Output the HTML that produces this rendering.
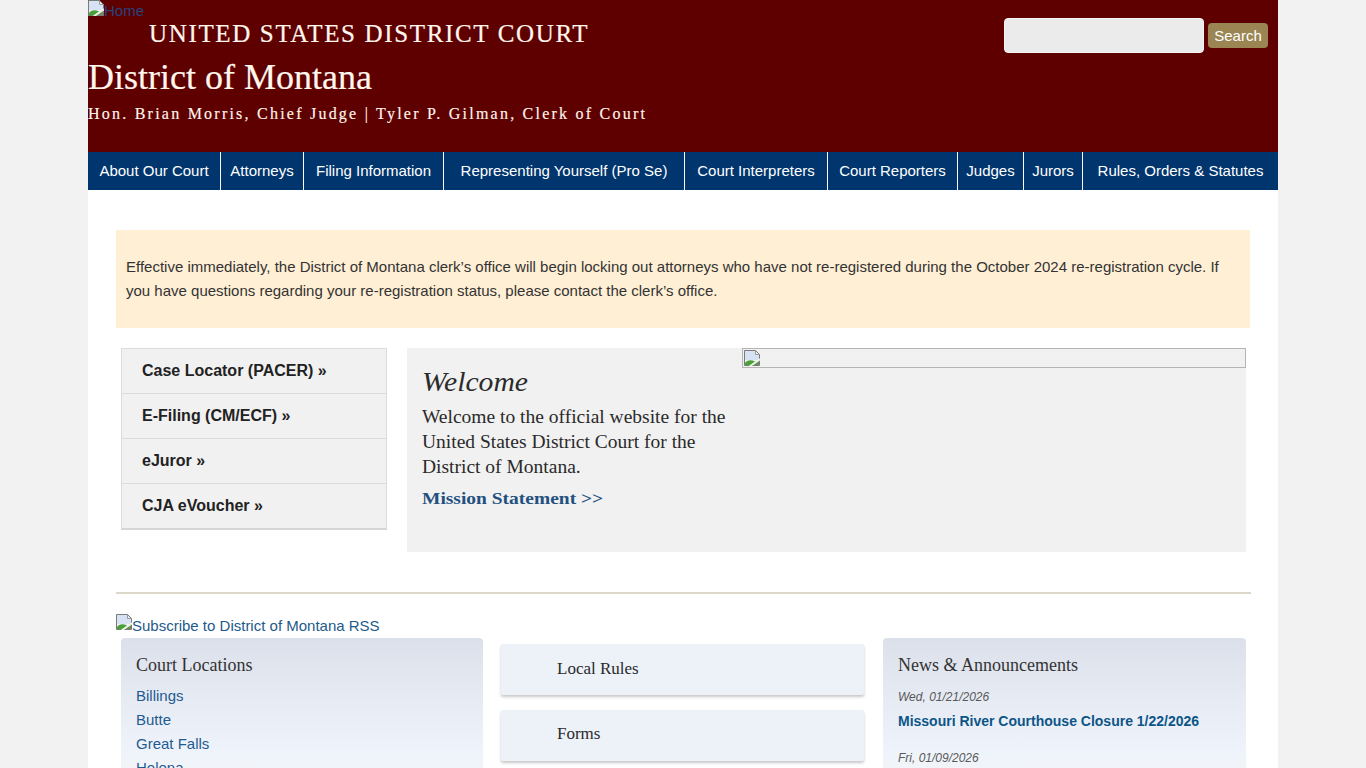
<!DOCTYPE html>
<html><head><meta charset="utf-8">
<style>
*{box-sizing:border-box;margin:0;padding:0}
html,body{width:1366px;height:768px;overflow:hidden}
body{background:#f2f2f2;font-family:"Liberation Sans",sans-serif;color:#222;position:relative}
#page{position:absolute;left:88px;top:0;width:1190px;height:768px;background:#fff}
#hdr{position:absolute;left:0;top:0;width:1190px;height:152px;background:#5f0000}
.abs{position:absolute;white-space:nowrap}
.serif{font-family:"Liberation Serif",serif}
#home{left:0;top:2px;font-size:15px;color:#28417f;line-height:17px}
.bi{display:inline-block;width:16px;height:16px;vertical-align:top;position:relative}
#usdc{left:61px;top:19px;font-size:25px;color:#fff6ee;-webkit-text-stroke:0.2px #fff6ee;letter-spacing:1.65px;line-height:30px}
#dom{left:0;top:57px;font-size:36px;color:#fff6ee;-webkit-text-stroke:0.2px #fff6ee;line-height:40px}
#hon{left:0;top:104px;font-size:16px;color:#fff6ee;-webkit-text-stroke:0.15px #fff6ee;letter-spacing:2.23px;line-height:20px}
#sinput{left:916px;top:18px;width:200px;height:35px;background:#ebebeb;border:1px solid #f6f2f2;border-radius:4px}
#sbtn{left:1120px;top:23px;width:60px;height:25px;background:#9a8553;border-radius:4px;color:#fff;font-size:15px;line-height:25px;text-align:center}
#nav{position:absolute;left:0;top:152px;width:1190px;height:38px;background:#00356d}
#nav .it{position:absolute;top:0;height:38px;line-height:38px;color:#fff;font-size:15px;text-align:center}
#nav .sep{position:absolute;top:0;width:1px;height:38px;background:#fff}
#alert{position:absolute;left:28px;top:230px;width:1134px;height:98px;background:#ffefd5;font-size:15px;line-height:24px;color:#333;padding:25px 10px 0 10px}

#side{position:absolute;left:33px;top:348px;width:266px;height:182px;border:1px solid #dcdcdc;border-bottom:2px solid #d6d6d6;background:#f1f1f1}
#side .li{position:absolute;left:0;width:264px;height:45px;border-top:1px solid #dcdcdc;font-weight:bold;font-size:16px;color:#222;line-height:20px;padding:12px 0 0 20px;white-space:nowrap}
#welcome{position:absolute;left:319px;top:348px;width:839px;height:204px;background:#f1f1f1}
#wimg{position:absolute;left:335px;top:0;width:504px;height:20px;border:1px solid #b4b4b4}
#wh{left:15px;top:17px;font-size:28px;font-style:italic;transform-origin:0 0;transform:scaleX(1.06);color:#2b2b2b;line-height:34px}
#wp{position:absolute;left:15px;top:56px;width:320px;font-size:19.5px;line-height:25px;color:#2a2a2a}
#ms{left:15px;top:141px;font-size:16.5px;font-weight:bold;transform-origin:0 0;transform:scaleX(1.18);color:#23507f;line-height:20px}
#hr{position:absolute;left:28px;top:592px;width:1135px;height:2px;background:#dbd8ca}
#rss{left:28px;top:617px;font-size:15px;color:#1d5a8a;line-height:17px}
.col{position:absolute;top:638px;height:200px;border-radius:4px;background:linear-gradient(#dbe0ea 0,#eef3fb 110px,#f1f5f9 130px)}
.colh{position:absolute;left:15px;top:17px;font-size:18px;color:#333;line-height:20px;white-space:nowrap}
.loc{position:absolute;left:15px;font-size:15px;color:#1f5a90;line-height:17px}
.btn{position:absolute;left:413px;width:363px;height:51px;background:#edf1f8;box-shadow:0 2px 3px rgba(0,0,0,.22);border-radius:2px}
.btn span{position:absolute;left:56px;top:15px;font-size:17px;color:#2a2a2a;line-height:20px}
.date{position:absolute;left:15px;font-size:12px;font-style:italic;color:#595959;line-height:14px;white-space:nowrap}
.news{position:absolute;left:15px;font-size:14px;font-weight:bold;color:#0d5587;line-height:16px;white-space:nowrap}
</style></head>
<body>
<div id="page">
 <div id="hdr">
  <div class="abs" id="home"><span class="bi" style="top:-2px"><svg width="16" height="16" viewBox="0 0 16 16" style="position:absolute;left:0;top:0"><path d="M0.5 0.5H11.5L15.5 4.5V15.5H0.5Z" fill="#eef2f6" stroke="#7a7a7a"/><path d="M1 1H11V5H15V10H1Z" fill="#d7e3f5"/><path d="M1 15.5V13C3 10 7 9.5 11 11.5L6.5 15.5Z" fill="#4d9f3c"/><path d="M12 11.5L15 10.5V15.5H9Z" fill="#6c8a5c"/><path d="M5.5 16.5L16.5 9" stroke="#e9f7e0" stroke-width="1.8"/><path d="M11.5 0.5V4.5H15.5" fill="none" stroke="#9a9a9a"/></svg></span>Home</div>
  <div class="abs serif" id="usdc">UNITED STATES DISTRICT COURT</div>
  <div class="abs serif" id="dom">District of Montana</div>
  <div class="abs serif" id="hon">Hon. Brian Morris, Chief Judge | Tyler P. Gilman, Clerk of Court</div>
  <div class="abs" id="sinput"></div>
  <div class="abs" id="sbtn">Search</div>
 </div>
 <div id="nav">
  <div class="it" style="left:0;width:132px">About Our Court</div>
  <div class="sep" style="left:132px"></div>
  <div class="it" style="left:133px;width:82px">Attorneys</div>
  <div class="sep" style="left:215px"></div>
  <div class="it" style="left:216px;width:139px">Filing Information</div>
  <div class="sep" style="left:355px"></div>
  <div class="it" style="left:356px;width:240px">Representing Yourself (Pro Se)</div>
  <div class="sep" style="left:596px"></div>
  <div class="it" style="left:597px;width:142px">Court Interpreters</div>
  <div class="sep" style="left:739px"></div>
  <div class="it" style="left:740px;width:129px">Court Reporters</div>
  <div class="sep" style="left:869px"></div>
  <div class="it" style="left:870px;width:65px">Judges</div>
  <div class="sep" style="left:935px"></div>
  <div class="it" style="left:936px;width:58px">Jurors</div>
  <div class="sep" style="left:994px"></div>
  <div class="it" style="left:995px;width:195px">Rules, Orders &amp; Statutes</div>
 </div>
 <div id="alert">Effective immediately, the District of Montana clerk’s office will begin locking out attorneys who have not re-registered during the October 2024 re-registration cycle. If you have questions regarding your re-registration status, please contact the clerk’s office.</div>
 <div id="side">
  <div class="li" style="top:-1px">Case Locator (PACER) »</div>
  <div class="li" style="top:44px">E-Filing (CM/ECF) »</div>
  <div class="li" style="top:89px">eJuror »</div>
  <div class="li" style="top:134px">CJA eVoucher »</div>
 </div>
 <div id="welcome">
  <div id="wimg"><span class="bi" style="position:absolute;left:1px;top:1px"><svg width="16" height="16" viewBox="0 0 16 16" style="position:absolute;left:0;top:0"><path d="M0.5 0.5H11.5L15.5 4.5V15.5H0.5Z" fill="#eef2f6" stroke="#7a7a7a"/><path d="M1 1H11V5H15V10H1Z" fill="#d7e3f5"/><path d="M1 15.5V13C3 10 7 9.5 11 11.5L6.5 15.5Z" fill="#4d9f3c"/><path d="M12 11.5L15 10.5V15.5H9Z" fill="#6c8a5c"/><path d="M5.5 16.5L16.5 9" stroke="#e9f7e0" stroke-width="1.8"/><path d="M11.5 0.5V4.5H15.5" fill="none" stroke="#9a9a9a"/></svg></span></div>
  <div class="abs serif" id="wh">Welcome</div>
  <div class="serif" id="wp">Welcome to the official website for the United States District Court for the District of Montana.</div>
  <div class="abs serif" id="ms">Mission Statement &gt;&gt;</div>
 </div>
 <div id="hr"></div>
 <div class="abs" id="rss"><span class="bi" style="top:-3px"><svg width="16" height="16" viewBox="0 0 16 16" style="position:absolute;left:0;top:0"><path d="M0.5 0.5H11.5L15.5 4.5V15.5H0.5Z" fill="#eef2f6" stroke="#7a7a7a"/><path d="M1 1H11V5H15V10H1Z" fill="#d7e3f5"/><path d="M1 15.5V13C3 10 7 9.5 11 11.5L6.5 15.5Z" fill="#4d9f3c"/><path d="M12 11.5L15 10.5V15.5H9Z" fill="#6c8a5c"/><path d="M5.5 16.5L16.5 9" stroke="#e9f7e0" stroke-width="1.8"/><path d="M11.5 0.5V4.5H15.5" fill="none" stroke="#9a9a9a"/></svg></span>Subscribe to District of Montana RSS</div>
 <div class="col" style="left:33px;width:362px">
  <div class="colh serif">Court Locations</div>
  <div class="loc" style="top:49px">Billings</div>
  <div class="loc" style="top:73px">Butte</div>
  <div class="loc" style="top:97px">Great Falls</div>
  <div class="loc" style="top:121px">Helena</div>
 </div>
 <div class="btn" style="top:644px"><span class="serif">Local Rules</span></div>
 <div class="btn" style="top:710px"><span class="serif" style="top:14px">Forms</span></div>
 <div class="col" style="left:795px;width:363px">
  <div class="colh serif">News &amp; Announcements</div>
  <div class="date" style="top:52px">Wed, 01/21/2026</div>
  <div class="news" style="top:75px">Missouri River Courthouse Closure 1/22/2026</div>
  <div class="date" style="top:113px">Fri, 01/09/2026</div>
 </div>
</div>
</body></html>
